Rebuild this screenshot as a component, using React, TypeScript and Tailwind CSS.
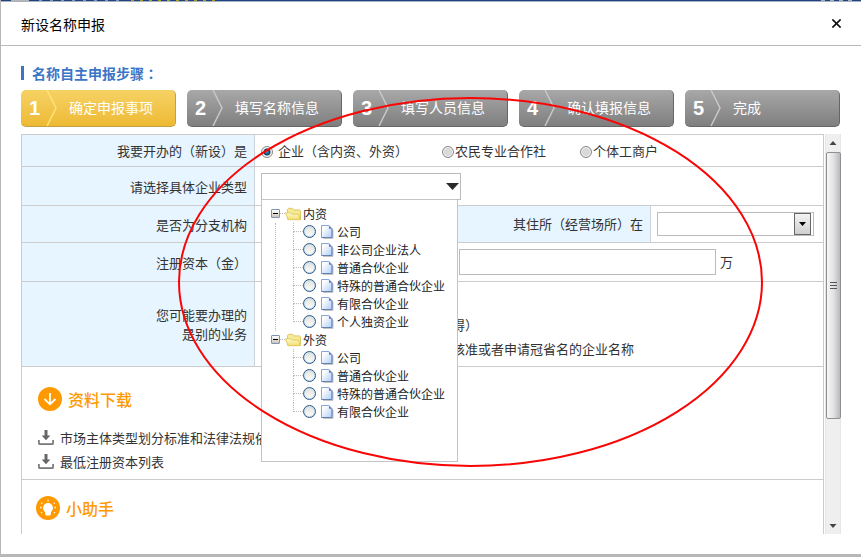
import React, { useState } from "react";

const steps = ["确定申报事项", "填写名称信息", "填写人员信息", "确认填报信息", "完成"];

const applicants = [
  { id: "enterprise", label: "企业（含内资、外资）", gap: "gap-1 w-[181px]" },
  { id: "coop", label: "农民专业合作社", gap: "w-[138px]" },
  { id: "individual", label: "个体工商户", gap: "" },
];

const companyTypes = [
  {
    name: "内资",
    items: ["公司", "非公司企业法人", "普通合伙企业", "特殊的普通合伙企业", "有限合伙企业", "个人独资企业"],
  },
  { name: "外资", items: ["公司", "普通合伙企业", "特殊的普通合伙企业", "有限合伙企业"] },
];

const downloads = ["市场主体类型划分标准和法律法规依据", "最低注册资本列表"];

function FolderIcon() {
  return (
    <svg width="16" height="14" viewBox="0 0 16 14" className="shrink-0" aria-hidden>
      <defs>
        <linearGradient id="folder" x1="0" y1="0" x2="0" y2="1">
          <stop offset="0" stopColor="#fffbd0" />
          <stop offset="1" stopColor="#f2dc6c" />
        </linearGradient>
      </defs>
      <path d="M2.500 12V2.300l1-1h4L9 2.900h5.700l.8.8v8.800z" fill="#f5e896" stroke="#dcc458" strokeWidth=".9" />
      <path d="M3 12.700L.6 5.800h5l1.200 1.300h6.700l1.700 5.600z" fill="url(#folder)" stroke="#dfc85c" strokeWidth=".9" />
    </svg>
  );
}

function PageIcon() {
  return (
    <svg width="13" height="14" viewBox="0 0 13 14" className="shrink-0" aria-hidden>
      <defs>
        <linearGradient id="page" x1="0" y1="0" x2="1" y2="1">
          <stop offset="0.2" stopColor="#ffffff" />
          <stop offset="1" stopColor="#b0cdf8" />
        </linearGradient>
      </defs>
      <path d="M2 13.500h10V5" fill="none" stroke="#c4c4c4" />
      <path d="M.5.5h7.500l3 3.200v8.800H.5z" fill="url(#page)" stroke="#86a5de" />
      <path d="M8 .7v3h2.800z" fill="#5673ad" />
      <path d="M11 3.700v8.800H.5" fill="none" stroke="#6580b0" />
    </svg>
  );
}

function TrayIcon() {
  return (
    <svg width="16" height="16" viewBox="0 0 16 16" fill="none" className="shrink-0" aria-hidden>
      <path d="M8 0v7" stroke="#666" strokeWidth="3" />
      <path d="M3.700 5.500h8.600L8 10.300z" fill="#666" />
      <path d="M.9 10v3.600q0 .6.600.6h13q.6 0 .6-.6V10" stroke="#777" strokeWidth="1.700" />
    </svg>
  );
}

function StepBar() {
  return (
    <ol className="mt-1.5 mr-px flex gap-[11px] text-white">
      {steps.map((step, i) => (
        <li
          key={step}
          className={
            "flex h-[37px] flex-1 items-center rounded-[5px] border-r border-b bg-linear-to-b pl-2 " +
            (i === 0
              ? "border-[#c2a047] from-[#f6d263] to-[#edba32]"
              : "border-[#666] from-[#a8a8a8] to-[#7f7f7f]")
          }
        >
          <span className="w-[17px] font-['Liberation_Sans'] text-xl font-bold">{i + 1}</span>
          <svg width="12" height="36" viewBox="0 0 12 36" fill="none" aria-hidden>
            <path d="M1 0L10 18L1 36" stroke={i === 0 ? "#ffe27a" : "#c8c8c8"} strokeWidth="1.500" />
          </svg>
          <span className="ml-[11px] pb-0.5 text-sm whitespace-nowrap">{step}</span>
        </li>
      ))}
    </ol>
  );
}

function TypeTree() {
  return (
    <div className="absolute top-[25px] -left-px z-10 h-[263px] w-[197px] border border-[#c4c4c4] bg-white pt-[5px] pl-[9px] text-xs text-[#222]">
      {companyTypes.map((group, g) => (
        <fieldset key={group.name}>
          <legend className="flex h-[18px] w-full items-center">
            <button
              type="button"
              aria-label={"收起" + group.name}
              className="flex h-[9px] w-[9px] items-center justify-center rounded-[1px] border border-[#7d95b3] bg-linear-to-b from-white to-[#ccc5bb]"
            >
              <span className="h-px w-[5px] bg-black" />
            </button>
            <span className="w-[5px] border-t border-dotted border-[#bbb]" />
            <FolderIcon />
            <span className="ml-0.5">{group.name}</span>
          </legend>
          <div className={g === 0 ? "ml-1 border-l border-dotted border-[#bbb]" : "ml-[5px]"}>
            {group.items.map((item, i) => (
              <label key={item} className="ml-[17px] flex h-[18px] items-center">
                <span className="flex w-[10px] shrink-0 flex-col self-stretch">
                  <span className="h-[9px] w-full border-b border-l border-dotted border-[#bbb]" />
                  <span
                    className={
                      i === group.items.length - 1 ? "h-[9px]" : "h-[9px] w-full border-l border-dotted border-[#bbb]"
                    }
                  />
                </span>
                <input
                  type="radio"
                  name="companyType"
                  className="h-[13px] w-[13px] shrink-0 appearance-none rounded-full border border-[#2e5a85] bg-linear-to-b from-[#e0e0dc] to-white shadow-[inset_0_0_0_1px_#c9dcea] checked:bg-[#2e5a85]"
                />
                <span className="mr-[3px] ml-[5px]">
                  <PageIcon />
                </span>
                <span className="whitespace-nowrap">{item}</span>
              </label>
            ))}
          </div>
        </fieldset>
      ))}
    </div>
  );
}

function Row({ label, height, children }: { label: React.ReactNode; height: string; children: React.ReactNode }) {
  return (
    <div className={"flex border-b border-[#ccc] " + height}>
      <div className="flex w-[233px] shrink-0 items-center justify-end border-r border-[#ccd3d8] bg-[#e6f5ff] pr-[7px] text-right leading-[19px]">
        {label}
      </div>
      {children}
    </div>
  );
}

function Scrollbar() {
  return (
    <div className="ml-px flex w-4 shrink-0 flex-col items-center border-x border-[#e6e6e6] bg-[#efefef]" aria-hidden>
      <svg width="14" height="18" viewBox="0 0 14 18">
        <path d="M3.500 11L7 7l3.500 4z" fill="#444" />
      </svg>
      <div className="flex h-[267px] w-[15px] flex-col items-center justify-center gap-0.5 rounded-[2px] border border-[#8f8f93] bg-linear-to-r from-[#f7f7f7] via-[#e2e2e4] to-[#b9b9be]">
        <span className="h-px w-[7px] bg-[#555]" />
        <span className="h-px w-[7px] bg-[#555]" />
        <span className="h-px w-[7px] bg-[#555]" />
      </div>
      <svg width="14" height="18" viewBox="0 0 14 18" className="mt-auto">
        <path d="M3.500 8L7 12l3.500-4z" fill="#444" />
      </svg>
    </div>
  );
}

export default function App() {
  const [applicant, setApplicant] = useState("enterprise");

  return (
    <div className="relative flex h-screen flex-col overflow-hidden border-b-3 border-l border-[#b7b7b7] bg-white font-['Noto_Sans_CJK_SC',sans-serif] text-[13px] text-[#333]">
      {/* sliver of the page behind the dialog */}
      <div className="flex h-0.5 shrink-0 border-b border-[#a9b2c0] bg-[#1d4380] pl-[10px]">
        <span className="h-px w-[18px] bg-[#b5b5b5]" />
        <span className="ml-[10px] h-px w-[80px] bg-[repeating-linear-gradient(90deg,#8797b0_0_3px,#1d4380_3px_11px)]" />
        <span className="ml-[12px] h-px w-[88px] bg-[repeating-linear-gradient(90deg,#b0a020_0_3px,#1d4380_3px_9px)]" />
        <span className="mr-1 ml-auto h-px w-[36px] bg-[repeating-linear-gradient(90deg,#a3adbd_0_4px,#1d4380_4px_9px)]" />
      </div>
      <header className="flex h-11 shrink-0 items-center justify-between border-b border-[#bbb] px-5 text-black">
        <h1 className="text-sm">新设名称申报</h1>
        <button type="button" aria-label="关闭">
          <svg width="9" height="9" viewBox="0 0 9 9" aria-hidden>
            <path d="M.4.4l8.200 8.200M8.600.4L.4 8.600" stroke="#111" strokeWidth="1.600" />
          </svg>
        </button>
      </header>

      <main className="flex min-h-0 flex-1 flex-col px-5 pt-4 pb-5">
        <h2 className="flex h-[22px] shrink-0 items-center gap-2 text-sm font-bold text-[#3b76c6]">
          <span className="h-[14px] w-[3px] bg-[#3b76c6]" />
          <span>
            名称自主申报步骤<span className="font-['Noto_Sans_CJK_TC']" lang="zh-TW">：</span>
          </span>
        </h2>
        <StepBar />

        <div className="mt-[7px] flex min-h-0 flex-1">
          <form className="min-w-0 flex-1 overflow-hidden border-x border-t border-[#ccc]">
            <Row label="我要开办的（新设）是" height="h-8">
              <div className="flex items-center pl-[6px]">
                {applicants.map((a) => (
                  <label key={a.id} className={"flex items-center whitespace-nowrap " + a.gap}>
                    <input
                      type="radio"
                      name="applicant"
                      checked={applicant === a.id}
                      onChange={() => setApplicant(a.id)}
                      className="mt-0.5 mr-px h-3 w-3 shrink-0 appearance-none rounded-full border border-[#8a8a8a] bg-[#d9d9d9] shadow-[inset_0_0_0_1px_#f4f4f4] checked:bg-[radial-gradient(circle,#35a3cf_0,#123a5c_3px,#e8e8e8_4px)]"
                    />
                    {a.label}
                  </label>
                ))}
              </div>
            </Row>

            <Row label={<label htmlFor="type">请选择具体企业类型</label>} height="h-[39px]">
              <div className="flex items-center pl-[6px]">
                <div className="relative flex h-[27px] w-[200px] items-center border border-[#bbb] bg-white">
                  <input id="type" readOnly className="h-full min-w-0 flex-1 px-1 outline-none" />
                  <svg width="13" height="7" viewBox="0 0 13 7" className="mr-px" aria-hidden>
                    <path d="M0 0h13L6.500 7z" fill="#2b2b2b" />
                  </svg>
                  <TypeTree />
                </div>
              </div>
            </Row>

            <Row label="是否为分支机构" height="h-[37px]">
              <div className="flex-1" />
              <label
                htmlFor="location"
                className="flex w-[194px] items-center justify-end border-x border-[#ccd3d8] bg-[#e6f5ff] pr-[7px]"
              >
                其住所（经营场所）在
              </label>
              <div className="flex w-[172px] items-center pl-[6px]">
                <div className="flex h-6 w-[157px] items-center border border-[#bbb] pr-0.5">
                  <select id="location" className="h-full min-w-0 flex-1 appearance-none outline-none">
                    <option></option>
                  </select>
                  <span className="flex h-[22px] w-[17px] items-center justify-center border border-[#666] bg-linear-to-b from-[#f4f4f4] to-[#cfcfcf]">
                    <svg width="7" height="4" viewBox="0 0 7 4" aria-hidden>
                      <path d="M0 0h7L3.500 4z" fill="#000" />
                    </svg>
                  </span>
                </div>
              </div>
            </Row>

            <Row label={<label htmlFor="capital">注册资本（金）</label>} height="h-[39px]">
              <div className="flex items-center gap-1 pl-[204px]">
                <input id="capital" className="h-[26px] w-[257px] border border-[#bbb] px-1 outline-none" />
                <span>万</span>
              </div>
            </Row>

            <Row
              label={
                <span>
                  您可能要办理的
                  <br />
                  是别的业务
                </span>
              }
              height="h-[85px]"
            >
              <div className="flex flex-col justify-end pb-[5px] pl-[197px] leading-6 whitespace-nowrap">
                <p>得）</p>
                <p>核准或者申请冠省名的企业名称</p>
              </div>
            </Row>

            <section className="h-[113px] border-b border-[#ccc] pt-5 pl-4">
              <h3 className="flex h-6 items-center gap-[6px] text-base font-medium text-[#ff9900]">
                <svg width="24" height="24" viewBox="0 0 24 24" fill="none" aria-hidden>
                  <circle cx="12" cy="12" r="12" fill="#ff9900" />
                  <path d="M12 6v11M6.500 12l5.500 5.300 5.500-5.300" stroke="#fff" strokeWidth="1.800" />
                </svg>
                资料下载
              </h3>
              <ul className="mt-[15px] leading-6">
                {downloads.map((d) => (
                  <li key={d}>
                    <a href="#" className="flex items-center gap-[6px]">
                      <TrayIcon />
                      {d}
                    </a>
                  </li>
                ))}
              </ul>
            </section>

            <section className="pt-4 pl-[14px]">
              <h3 className="flex h-6 items-center gap-[6px] text-base font-medium text-[#ff9900]">
                <svg width="24" height="24" viewBox="0 0 24 24" fill="none" aria-hidden>
                  <circle cx="12" cy="12" r="12" fill="#ff9900" />
                  <path
                    d="M12 7a5 5 0 0 0-5 5c0 2 1.200 2.800 2 4l.5 3.500h5L15 16c.8-1.200 2-2 2-4a5 5 0 0 0-5-5z"
                    fill="#fff"
                  />
                  <path
                    d="M12 3.800V5.200M6.300 7.500L5.200 6.700M17.700 7.500l1.100-.8M5.500 11.500H4M18.500 11.500H20M6 16.200l-1 .8M18 16.200l1 .8"
                    stroke="#fff"
                    strokeWidth="1.300"
                  />
                </svg>
                小助手
              </h3>
            </section>
          </form>
          <Scrollbar />
        </div>
      </main>

      <svg
        width="588"
        height="372"
        viewBox="0 0 588 372"
        fill="none"
        className="pointer-events-none absolute top-24 left-44 z-20"
        aria-hidden
      >
        <ellipse cx="293.500" cy="186" rx="291.500" ry="184" stroke="#fa0505" strokeWidth="2" />
      </svg>
    </div>
  );
}
